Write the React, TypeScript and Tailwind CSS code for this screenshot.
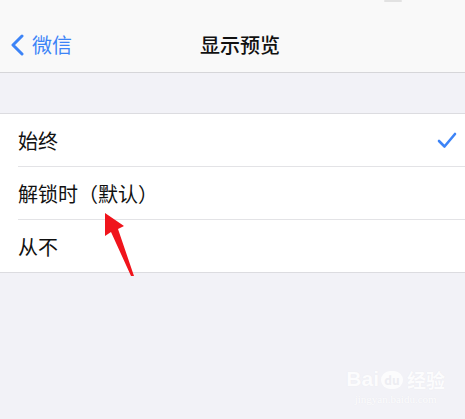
import React from 'react';

const FONT = '"Noto Sans CJK SC", "Liberation Sans", sans-serif';

const options = [
  { label: '始终', checked: true },
  { label: '解锁时（默认）', checked: false },
  { label: '从不', checked: false },
];

export default function App() {
  return (
    <div className="relative w-[465px] h-[419px] overflow-hidden bg-[#f2f2f7]" style={{ fontFamily: FONT }}>
      {/* nav bar */}
      <div className="relative h-[73px] bg-[#f9f9f9] border-b border-[#d6d6d9]">
        <div className="absolute left-[384px] top-0 w-[18px] h-[2px] bg-[#e2e2e2] rounded-sm" />
        <div className="flex items-center h-full pt-[18px] relative">
          <div className="flex items-center pl-[10px] text-[#3d84f7]">
            <svg width="15" height="22" viewBox="0 0 15 22" fill="none">
              <path d="M12 2 L3 11 L12 20" stroke="#3d84f7" strokeWidth="3" strokeLinecap="round" strokeLinejoin="round" />
            </svg>
            <span className="ml-[7px] text-[20px] leading-none">微信</span>
          </div>
          <div className="absolute left-[15px] right-0 text-center text-[20px] leading-none font-medium text-[#111]">
            显示预览
          </div>
        </div>
      </div>

      <div className="h-[40px]" />

      {/* options */}
      <div className="bg-white border-y border-[#dcdce0]">
        {options.map((o, i) => (
          <div key={o.label} className="flex pl-[18px]">
            <div className={`flex flex-1 items-center pr-[8px] ${i < options.length - 1 ? 'h-[53px] border-b border-[#e3e3e6]' : 'h-[52px]'}`}>
              <span className="flex-1 text-[20px] leading-none text-[#111] pt-[2px]">{o.label}</span>
              {o.checked && (
                <svg width="20" height="17" viewBox="0 0 20 17" fill="none">
                  <path d="M2 9 L7.5 14.5 L18 2" stroke="#3d84f7" strokeWidth="2.6" strokeLinecap="round" strokeLinejoin="round" />
                </svg>
              )}
            </div>
          </div>
        ))}
      </div>

      {/* red annotation arrow */}
      <svg className="absolute left-0 top-0" width="465" height="419" viewBox="0 0 465 419">
        <polygon points="105,213 124,226 118,229 134,276 131,276 111,232 105,236" fill="#f0141c" />
      </svg>

      {/* watermark */}
      <div className="absolute right-[20px] bottom-[14px] flex flex-col items-center text-white opacity-80">
        <div className="flex items-end gap-[2px]">
          <span className="text-[21px] font-bold leading-none" style={{ fontFamily: '"Liberation Sans", sans-serif', textShadow: '0 0 1px #e4e4ea' }}>Bai</span>
          <span className="flex items-center justify-center w-[22px] h-[18px] rounded-full bg-white text-[#ececf1] text-[12px] font-bold leading-none">du</span>
          <span className="text-[19px] font-bold leading-none ml-[2px]" style={{ textShadow: '0 0 1px #e4e4ea' }}>经验</span>
        </div>
        <span className="text-[11px] leading-none mt-[5px]" style={{ fontFamily: '"Liberation Serif", serif', textShadow: '0 0 1px #e4e4ea' }}>jingyan.baidu.com</span>
      </div>
    </div>
  );
}
